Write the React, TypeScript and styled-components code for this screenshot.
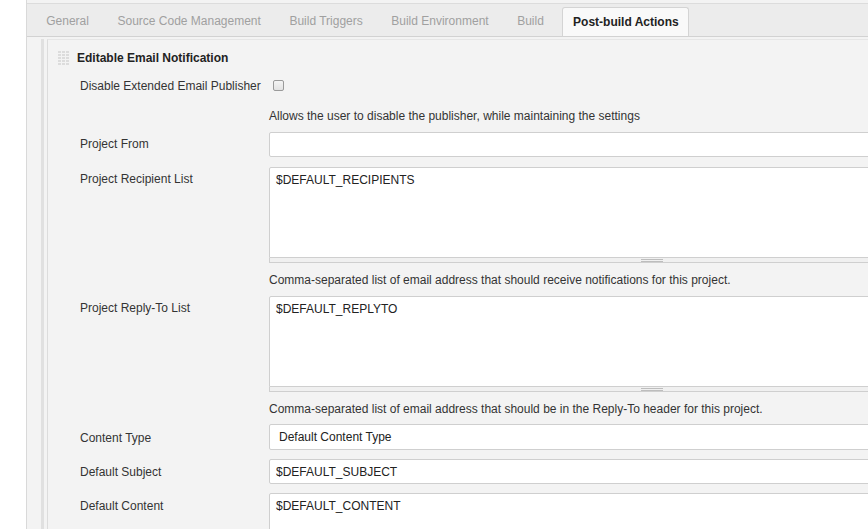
import React from "react";
import styled, { createGlobalStyle } from "styled-components";

const GlobalStyle = createGlobalStyle`
  html, body {
    margin: 0;
    padding: 0;
    overflow: hidden;
    background: #ffffff;
    font-family: "Liberation Sans", Arial, sans-serif;
    font-size: 12px;
    color: #333333;
  }
`;

const tabs = [
  "General",
  "Source Code Management",
  "Build Triggers",
  "Build Environment",
  "Build",
  "Post-build Actions",
];

const FIELD_WIDTH = 766;

const HandleIcon: React.FC = () => (
  <svg width="11" height="16" viewBox="0 0 11 16">
    {[0, 1, 2, 3, 4].map((r) =>
      [0, 1, 2].map((c) => (
        <rect
          key={`${r}-${c}`}
          x={c * 4}
          y={r * 3 + 1}
          width="3"
          height="2"
          fill="#dcdcdc"
        />
      ))
    )}
  </svg>
);

const App: React.FC = () => {
  return (
    <>
      <GlobalStyle />
      <Page>
        <Sidebar />
        <Main>
          <TabBar>
            {tabs.map((t) => (
              <Tab key={t} $active={t === "Post-build Actions"}>
                {t}
              </Tab>
            ))}
          </TabBar>
          <Body>
            <Indent>
              <Section>
                <SectionHeader>
                  <HandleIcon />
                  <SectionTitle>Editable Email Notification</SectionTitle>
                </SectionHeader>
                <Form>
                  <Row $mt={13}>
                    <Label $top={0}>Disable Extended Email Publisher</Label>
                    <Field>
                      <Checkbox type="checkbox" />
                    </Field>
                  </Row>
                  <Help $mt={16}>
                    Allows the user to disable the publisher, while maintaining
                    the settings
                  </Help>
                  <Row $mt={9}>
                    <Label $top={5}>Project From</Label>
                    <Field>
                      <TextInput defaultValue="" />
                    </Field>
                  </Row>
                  <Row $mt={10}>
                    <Label $top={5}>Project Recipient List</Label>
                    <Field>
                      <TextArea defaultValue="$DEFAULT_RECIPIENTS" />
                      <Grip>
                        <GripLines />
                      </Grip>
                    </Field>
                  </Row>
                  <Help $mt={10}>
                    Comma-separated list of email address that should receive
                    notifications for this project.
                  </Help>
                  <Row $mt={9}>
                    <Label $top={5}>Project Reply-To List</Label>
                    <Field>
                      <TextArea defaultValue="$DEFAULT_REPLYTO" />
                      <Grip>
                        <GripLines />
                      </Grip>
                    </Field>
                  </Row>
                  <Help $mt={10}>
                    Comma-separated list of email address that should be in the
                    Reply-To header for this project.
                  </Help>
                  <Row $mt={8}>
                    <Label $top={7}>Content Type</Label>
                    <Field>
                      <Select defaultValue="default">
                        <option value="default">Default Content Type</option>
                      </Select>
                    </Field>
                  </Row>
                  <Row $mt={9}>
                    <Label $top={6}>Default Subject</Label>
                    <Field>
                      <TextInput defaultValue="$DEFAULT_SUBJECT" />
                    </Field>
                  </Row>
                  <Row $mt={9}>
                    <Label $top={6}>Default Content</Label>
                    <Field>
                      <TextArea defaultValue="$DEFAULT_CONTENT" />
                    </Field>
                  </Row>
                </Form>
              </Section>
            </Indent>
          </Body>
        </Main>
      </Page>
    </>
  );
};

const Page = styled.div`
  display: flex;
  width: 868px;
  height: 529px;
  overflow: hidden;
`;

const Sidebar = styled.div`
  flex: 0 0 26px;
  background: #ffffff;
  border-right: 1px solid #d9d9d9;
`;

const Main = styled.div`
  flex: 1;
  min-width: 0;
  background: #f3f3f3;
  padding-top: 3px;
`;

const TabBar = styled.div`
  display: flex;
  align-items: flex-end;
  height: 32px;
  padding-left: 5px;
  background: #ececec;
  border-top: 1px solid #dcdcdc;
  border-bottom: 1px solid #d2d2d2;
  white-space: nowrap;
`;

const Tab = styled.div<{ $active?: boolean }>`
  box-sizing: border-box;
  display: flex;
  align-items: center;
  height: ${(p) => (p.$active ? "30px" : "32px")};
  padding: ${(p) => (p.$active ? "0 9px 0 10px" : "2px 14.25px 0")};
  margin-left: ${(p) => (p.$active ? "4px" : "0")};
  margin-bottom: ${(p) => (p.$active ? "-1px" : "0")};
  color: ${(p) => (p.$active ? "#222222" : "#a0a0a0")};
  font-weight: ${(p) => (p.$active ? "bold" : "normal")};
  background: ${(p) => (p.$active ? "#f9f9f9" : "transparent")};
  border: ${(p) => (p.$active ? "1px solid #d4d4d4" : "none")};
  border-bottom: ${(p) => (p.$active ? "1px solid #d2d2d2" : "none")};
  border-radius: 3px 3px 0 0;
`;

const Body = styled.div`
  padding: 2px 0 0 14px;
`;

const Indent = styled.div`
  border-left: 3px solid #e0e0e0;
  padding-left: 3px;
  height: 500px;
`;

const Section = styled.div`
  border-left: 1px solid #dcdcdc;
  border-top: 1px solid #e6e6e6;
  height: 100%;
`;

const SectionHeader = styled.div`
  display: flex;
  align-items: center;
  gap: 8px;
  padding: 10px 0 0 10px;
  height: 16px;
`;

const SectionTitle = styled.span`
  font-weight: bold;
  color: #222222;
  line-height: 14px;
`;

const Form = styled.div`
  display: flex;
  flex-direction: column;
  padding-left: 32px;
`;

const Row = styled.div<{ $mt: number }>`
  display: grid;
  grid-template-columns: 189px ${FIELD_WIDTH}px;
  margin-top: ${(p) => p.$mt}px;
`;

const Label = styled.div<{ $top: number }>`
  padding-top: ${(p) => p.$top}px;
  line-height: 14px;
  color: #333333;
`;

const Field = styled.div`
  display: flex;
  flex-direction: column;
  align-items: flex-start;
`;

const Checkbox = styled.input`
  appearance: none;
  width: 11px;
  height: 11px;
  margin: 1px 0 0 4px;
  border: 1px solid #9a9a9a;
  border-radius: 2px;
  background: linear-gradient(#f4f4f4, #e2e2e2);
`;

const Help = styled.div<{ $mt: number }>`
  margin-top: ${(p) => p.$mt}px;
  padding-left: 189px;
  line-height: 14px;
  color: #333333;
  white-space: nowrap;
`;

const fieldBase = `
  box-sizing: border-box;
  width: ${FIELD_WIDTH}px;
  border: 1px solid #cfcfcf;
  border-radius: 2px;
  background: #ffffff;
  font-family: "Liberation Sans", Arial, sans-serif;
  font-size: 12px;
  color: #222222;
  outline: none;
`;

const TextInput = styled.input`
  ${fieldBase}
  height: 25px;
  padding: 0 6px;
`;

const Select = styled.select`
  ${fieldBase}
  appearance: none;
  height: 26px;
  padding: 0 9px;
`;

const TextArea = styled.textarea`
  ${fieldBase}
  display: block;
  height: 91px;
  padding: 5px 6px;
  resize: none;
  line-height: 14px;
  border-radius: 2px 2px 0 0;
`;

const Grip = styled.div`
  box-sizing: border-box;
  width: ${FIELD_WIDTH}px;
  height: 5px;
  display: flex;
  justify-content: center;
  align-items: center;
  background: #f0f0f0;
  border: 1px solid #cfcfcf;
  border-top: none;
`;

const GripLines = styled.div`
  width: 22px;
  height: 3px;
  border-top: 1px solid #bdbdbd;
  border-bottom: 1px solid #bdbdbd;
  box-sizing: border-box;
`;

export default App;
